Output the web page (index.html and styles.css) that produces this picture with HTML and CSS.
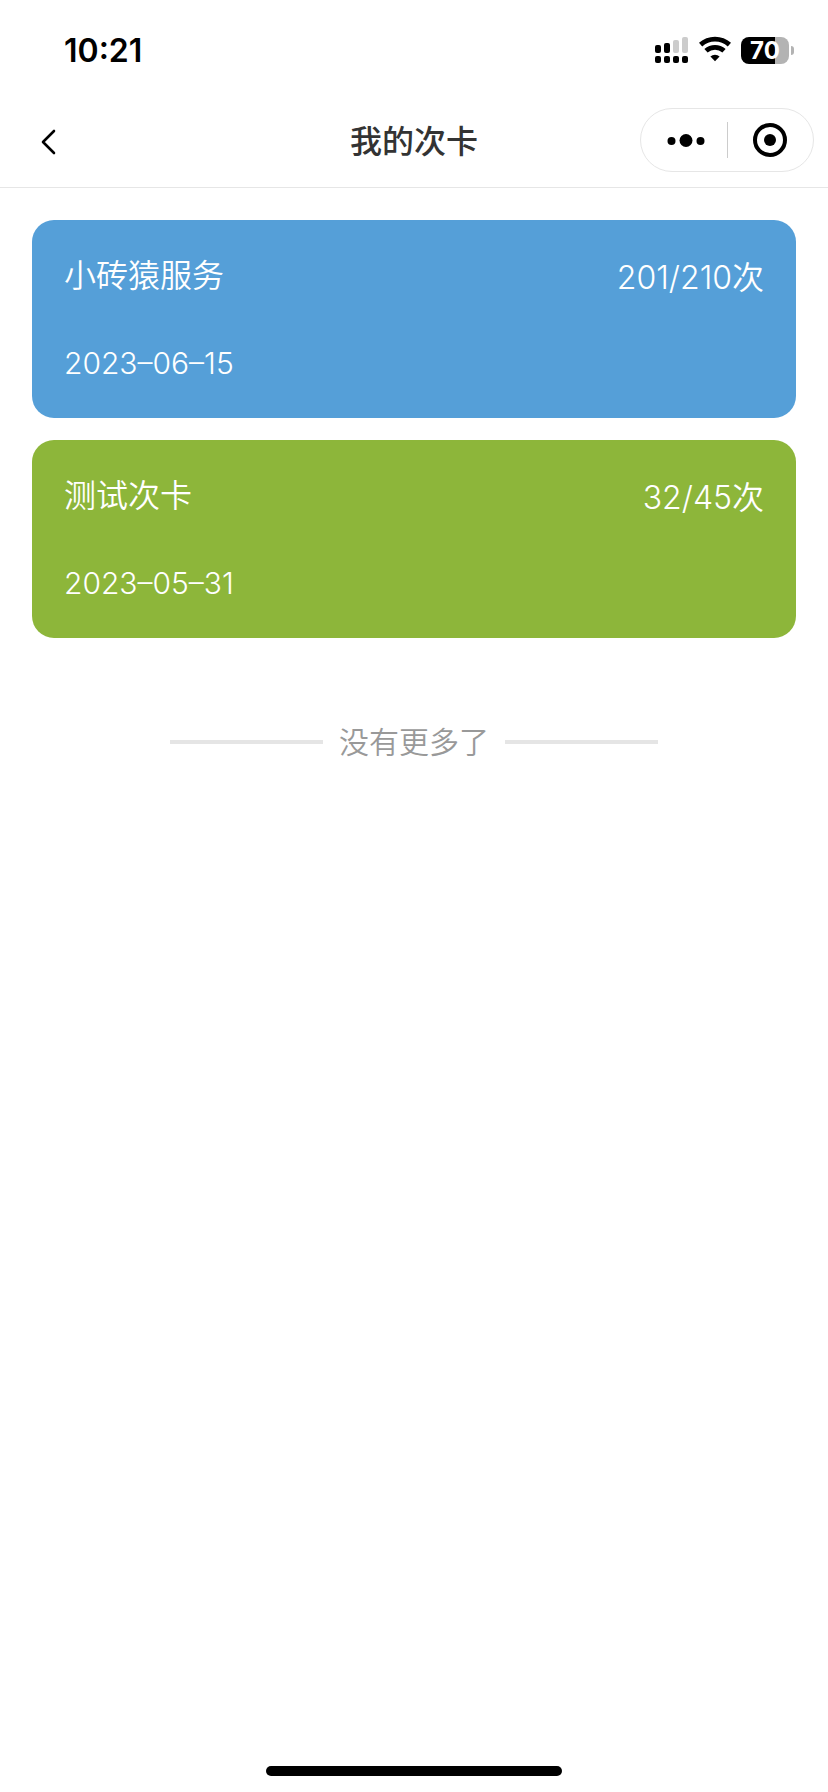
FILE: index.html
```html
<!DOCTYPE html>
<html lang="zh-CN">
<head>
    <meta charset="UTF-8">
    <meta name="viewport" content="width=device-width, initial-scale=1.0">
    <title>我的次卡</title>
    <link rel="stylesheet" href="styles.css">
</head>
<body>
    <div class="status-bar">
        <time class="status-time">10:21</time>
        <div class="status-icons">
            <svg class="icon-signal" width="34" height="28" viewBox="0 0 34 28">
                <rect x="0" y="9" width="6" height="8" rx="2"/>
                <rect x="9" y="7" width="6" height="10" rx="2"/>
                <rect x="18" y="4" width="6" height="13" rx="2" fill="#ccc"/>
                <rect x="27" y="1" width="6" height="16" rx="2" fill="#ccc"/>
                <rect x="0" y="20" width="6" height="7" rx="2"/>
                <rect x="9" y="20" width="6" height="7" rx="2"/>
                <rect x="18" y="20" width="6" height="7" rx="2"/>
                <rect x="27" y="20" width="6" height="7" rx="2"/>
            </svg>
            <svg class="icon-wifi" width="32" height="28" viewBox="0 0 32 28">
                <path d="M1.6 8.6a21.5 21.5 0 0 1 28.8 0" fill="none" stroke="#000" stroke-width="4.8"/>
                <path d="M7 14.8a13.4 13.4 0 0 1 18 0" fill="none" stroke="#000" stroke-width="4.8"/>
                <path d="M16 25.2l-4.6-4.6a6.8 6.8 0 0 1 9.2 0z"/>
            </svg>
            <div class="battery">
                <span class="battery-body">70</span>
                <span class="battery-cap"></span>
            </div>
        </div>
    </div>

    <header class="nav-bar">
        <button class="nav-back" type="button" aria-label="返回">
            <svg width="16" height="26" viewBox="0 0 16 26">
                <path d="M14 2L3 13l11 11" fill="none" stroke="#000" stroke-width="2.6" stroke-linecap="round" stroke-linejoin="round"/>
            </svg>
        </button>
        <h1 class="nav-title">我的次卡</h1>
        <div class="capsule">
            <button class="capsule-btn" type="button" aria-label="更多">
                <svg width="44" height="36" viewBox="0 0 44 36">
                    <circle cx="9.5" cy="19" r="4"/>
                    <circle cx="24" cy="18.5" r="6.5"/>
                    <circle cx="38.5" cy="19" r="4"/>
                </svg>
            </button>
            <button class="capsule-btn" type="button" aria-label="关闭">
                <svg width="36" height="36" viewBox="0 0 36 36">
                    <circle cx="18" cy="18" r="15" fill="none" stroke="#000" stroke-width="4"/>
                    <circle cx="18" cy="18" r="6"/>
                </svg>
            </button>
        </div>
    </header>

    <main class="content">
        <ul class="card-list">
            <li class="card card-blue">
                <div class="card-top">
                    <h2 class="card-name">小砖猿服务</h2>
                    <span class="card-count">201/210次</span>
                </div>
                <time class="card-date" datetime="2023-06-15">2023–06–15</time>
            </li>
            <li class="card card-green">
                <div class="card-top">
                    <h2 class="card-name">测试次卡</h2>
                    <span class="card-count">32/45次</span>
                </div>
                <time class="card-date" datetime="2023-05-31">2023–05–31</time>
            </li>
        </ul>
        <p class="no-more">没有更多了</p>
    </main>

    <div class="home-indicator"></div>
</body>
</html>
```

FILE: styles.css
```css
* {
    margin: 0;
    padding: 0;
    box-sizing: border-box;
}

body {
    display: flex;
    flex-direction: column;
    min-height: 100vh;
    background-color: #fff;
    color: #000;
    font-family: Inter, "Noto Sans CJK SC", sans-serif;
    font-size: 32px;
}

button {
    border: 0;
    background: none;
    cursor: pointer;
}

svg {
    display: block;
}

/* status bar */
.status-bar {
    display: flex;
    justify-content: space-between;
    align-items: center;
    height: 92px;
    padding: 8px 34px 0 64px;
}

.status-time {
    font-weight: 600;
}

.status-icons {
    display: flex;
    align-items: center;
}

.icon-wifi {
    margin: 0 10px;
}

.battery {
    display: flex;
    align-items: center;
    gap: 2px;
}

.battery-body {
    width: 48px;
    height: 27px;
    border-radius: 8px;
    background: linear-gradient(to right, #000 34px, #b3b3b3 34px);
    color: #fff;
    font-size: 24px;
    font-weight: 700;
    line-height: 27px;
    text-align: center;
}

.battery-cap {
    width: 3px;
    height: 9px;
    border-radius: 0 4px 4px 0;
    background-color: #b3b3b3;
}

/* nav bar */
.nav-bar {
    display: grid;
    grid-template-columns: 1fr auto 1fr;
    align-items: center;
    padding: 16px 14px 15px;
    border-bottom: 1px solid #e6e6e6;
}

.nav-back {
    justify-self: start;
    padding: 14px 26px 10px;
}

.nav-title {
    padding-top: 4px;
    color: #333;
    font-size: 32px;
    font-weight: 500;
    line-height: 48px;
}

.capsule {
    display: flex;
    align-items: center;
    justify-self: end;
    width: 174px;
    height: 64px;
    border: 1px solid #e6e6e6;
    border-radius: 32px;
}

.capsule-btn {
    display: flex;
    flex: 1;
    justify-content: center;
}

.capsule-btn + .capsule-btn {
    border-left: 1px solid #ccc;
}

/* card list */
.content {
    padding: 32px;
}

.card-list {
    display: flex;
    flex-direction: column;
    gap: 22px;
    list-style: none;
}

.card {
    padding: 32px;
    border-radius: 22px;
    color: #fff;
    font-weight: 350;
}

.card-blue {
    background-color: #559fd8;
}

.card-green {
    background-color: #8db63a;
}

.card-top {
    display: flex;
    justify-content: space-between;
    margin-bottom: 36px;
}

.card-name {
    font-size: 32px;
    font-weight: 350;
    line-height: 48px;
}

.card-count {
    line-height: 52px;
}

.card-date {
    display: block;
    font-size: 30px;
    line-height: 46px;
}

.no-more {
    display: flex;
    justify-content: center;
    align-items: center;
    gap: 16px;
    margin-top: 82px;
    color: #999;
    font-size: 30px;
    font-weight: 350;
    line-height: 44px;
}

.no-more::before,
.no-more::after {
    content: "";
    width: 20%;
    height: 4px;
    background-color: #e5e5e5;
}

.home-indicator {
    align-self: center;
    width: 296px;
    height: 10px;
    margin-top: auto;
    margin-bottom: 16px;
    border-radius: 5px;
    background-color: #000;
}
```
